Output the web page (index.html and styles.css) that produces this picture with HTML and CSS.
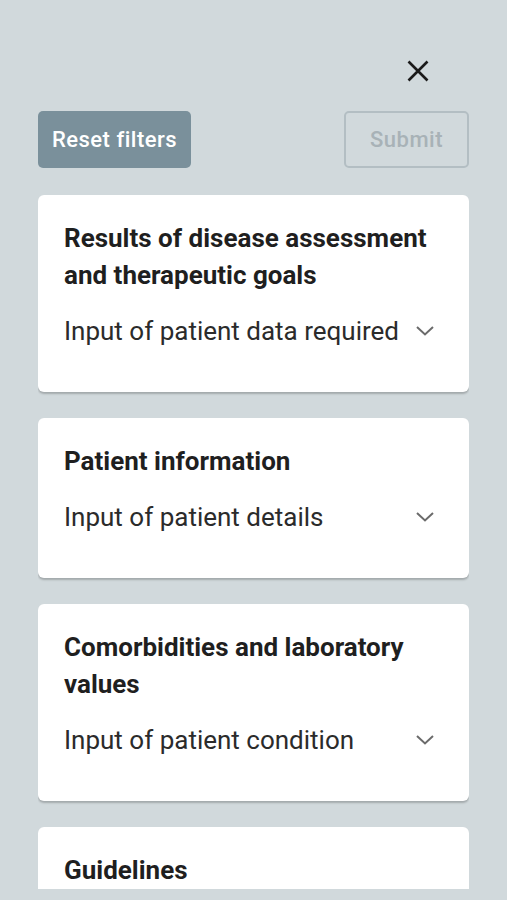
FILE: index.html
```html
<!DOCTYPE html>
<html lang="en">
<head>
  <meta charset="UTF-8">
  <meta name="viewport" content="width=device-width, initial-scale=1.0">
  <title>Filters</title>
  <link rel="stylesheet" href="styles.css">
</head>
<body>
  <div class="panel">
    <div class="top">
      <button class="close" aria-label="Close">
        <svg width="22" height="22" viewBox="0 0 22 22"><path d="M1.5 1.5 L20.5 20.5 M20.5 1.5 L1.5 20.5" stroke="#1b1b1b" stroke-width="2.6" fill="none"/></svg>
      </button>
    </div>

    <div class="actions">
      <button class="btn btn-reset">Reset filters</button>
      <button class="btn btn-submit" disabled>Submit</button>
    </div>

    <div class="list">
      <div class="card">
        <h2>Results of disease assessment and therapeutic goals</h2>
        <div class="row">
          <span>Input of patient data required</span>
          <svg class="chev" width="18" height="10" viewBox="0 0 18 10"><path d="M1 1 L9 8.5 L17 1" stroke="#6b6b6b" stroke-width="2" fill="none"/></svg>
        </div>
      </div>

      <div class="card">
        <h2>Patient information</h2>
        <div class="row">
          <span>Input of patient details</span>
          <svg class="chev" width="18" height="10" viewBox="0 0 18 10"><path d="M1 1 L9 8.5 L17 1" stroke="#6b6b6b" stroke-width="2" fill="none"/></svg>
        </div>
      </div>

      <div class="card">
        <h2>Comorbidities and laboratory values</h2>
        <div class="row">
          <span>Input of patient condition</span>
          <svg class="chev" width="18" height="10" viewBox="0 0 18 10"><path d="M1 1 L9 8.5 L17 1" stroke="#6b6b6b" stroke-width="2" fill="none"/></svg>
        </div>
      </div>

      <div class="card">
        <h2>Guidelines</h2>
      </div>
    </div>
  </div>
</body>
</html>
```

FILE: styles.css
```css
body { margin: 0; background: #d1d9dc; font-family: Roboto, "Noto Sans", sans-serif; }
.panel { padding: 0 38px; }
.top { display: flex; justify-content: flex-end; padding: 60px 40px 0 0; }
.close { background: none; border: none; padding: 0; width: 22px; height: 22px; display: block; }
.close svg { display: block; }

.actions { display: flex; justify-content: space-between; margin-top: 29px; }
.btn {
  font-family: Roboto, sans-serif; font-size: 22px; font-weight: 500;
  height: 57px; border-radius: 5px; padding: 0; letter-spacing: 0.5px;
}
.btn-reset { background: #7a909b; color: #fff; border: none; width: 153px; }
.btn-submit { background: transparent; color: #a8b2b7; border: 2px solid #b3bec3; width: 125px; }

.list {
  margin-top: 27px; height: 694px; overflow: hidden;
  display: flex; flex-direction: column; gap: 26px;
}
.card {
  flex-shrink: 0;
  background: #fff; border-radius: 6px;
  box-shadow: 0 2px 2px rgba(0,0,0,0.22);
  padding: 25px 26px 37px;
}
.card h2 { margin: 0; font-size: 26px; font-weight: 700; line-height: 37px; color: #1f1f1f; }
.row {
  display: flex; align-items: center; justify-content: space-between;
  height: 48px; margin-top: 13px;
  font-size: 26px; color: #2b2b2b;
}
.chev { margin-right: 9px; flex-shrink: 0; }
```
